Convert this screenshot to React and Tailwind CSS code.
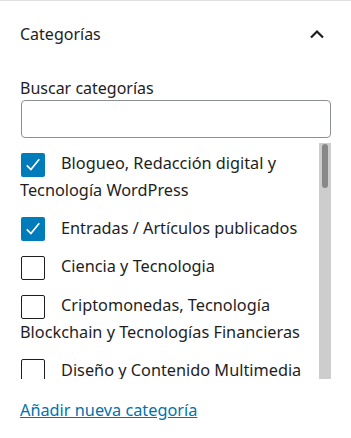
const items = [
  { label: "Blogueo, Redacción digital y Tecnología WordPress", checked: true },
  { label: "Entradas / Artículos publicados", checked: true },
  { label: "Ciencia y Tecnologia", checked: false },
  { label: "Criptomonedas, Tecnología Blockchain y Tecnologías Financieras", checked: false },
  { label: "Diseño y Contenido Multimedia", checked: false },
  { label: "Herramientas y Recursos", checked: false },
];

function Check({ checked }) {
  if (checked) {
    return (
      <span className="inline-flex h-[24px] w-[24px] items-center justify-center rounded-[2px] bg-[#007cba] align-middle">
        <svg width="20" height="20" viewBox="0 0 24 24" fill="none">
          <path d="M4.5 12.5l5 5L19.5 5" stroke="white" strokeWidth="2" />
        </svg>
      </span>
    );
  }
  return (
    <span className="inline-block h-[24px] w-[24px] rounded-[2px] border border-[#1e1e1e] bg-white align-middle" />
  );
}

export default function App() {
  return (
    <div
      className="h-[438px] w-[351px] overflow-hidden border-t border-[#e0e0e0] bg-white text-[#1e1e1e]"
      style={{ fontFamily: '"Noto Sans", "Open Sans", sans-serif' }}
    >
      <div className="flex h-[66px] items-center justify-between pl-[20px] pr-[26px]">
        <span className="text-[16px]">Categorías</span>
        <svg width="16" height="10" viewBox="0 0 16 10" fill="none">
          <path d="M2 8.5l6-6 6 6" stroke="#1e1e1e" strokeWidth="2.2" />
        </svg>
      </div>
      <div className="px-[20px]">
        <div className="mt-[9px] text-[16px] leading-[24px]">Buscar categorías</div>
        <div className="ml-[1px] h-[38px] w-[310px] rounded-[4px] border border-[#8c8f94]" />
        <div className="mt-[5px] flex h-[236px] w-[311px]">
          <div className="flex-1 overflow-hidden pt-[7px]">
            {items.map((it) => (
              <div key={it.label} className="mb-[12px] pr-[12px] text-[16.3px] leading-[26px]">
                <span className="ml-[1px] mr-[16px]">
                  <Check checked={it.checked} />
                </span>
                {it.label}
              </div>
            ))}
          </div>
          <div className="flex w-[12px] justify-center bg-[#cdcdcd] pt-[1px]">
            <div className="h-[44px] w-[6px] rounded-full bg-[#888888]" />
          </div>
        </div>
        <div className="mt-[18px] leading-[26px]">
          <a href="#" className="text-[16.3px] text-[#0073aa] underline">
            Añadir nueva categoría
          </a>
        </div>
      </div>
    </div>
  );
}
